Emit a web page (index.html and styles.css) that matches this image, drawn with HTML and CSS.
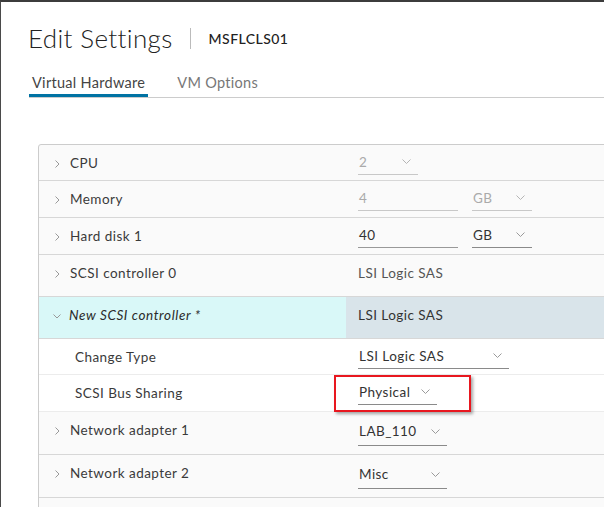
FILE: index.html
```html
<!DOCTYPE html>
<html>
<head>
<meta charset="utf-8">
<link rel="stylesheet" href="styles.css">
</head>
<body>
<div class="dialog">
  <div class="header">
    <h1 class="title">Edit Settings</h1>
    <span class="divider"></span>
    <span class="vmname">MSFLCLS01</span>
  </div>
  <div class="tabs">
    <div class="tab active">Virtual Hardware</div>
    <div class="tab">VM Options</div>
  </div>
  <div class="table">
    <div class="row h36">
      <div class="label"><svg class="chev" viewBox="0 0 5 8"><polyline points="0.5,0.5 4,4 0.5,7.5"/></svg>CPU</div>
      <div class="value"><span class="select disabled w60"><span>2</span><svg class="dd" viewBox="0 0 9 5"><polyline points="0.5,0.5 4.5,4.5 8.5,0.5"/></svg></span></div>
    </div>
    <div class="row h37">
      <div class="label"><svg class="chev" viewBox="0 0 5 8"><polyline points="0.5,0.5 4,4 0.5,7.5"/></svg>Memory</div>
      <div class="value">
        <span class="input disabled w100">4</span>
        <span class="select disabled w60 unit"><span>GB</span><svg class="dd" viewBox="0 0 9 5"><polyline points="0.5,0.5 4.5,4.5 8.5,0.5"/></svg></span>
      </div>
    </div>
    <div class="row h37">
      <div class="label"><svg class="chev" viewBox="0 0 5 8"><polyline points="0.5,0.5 4,4 0.5,7.5"/></svg>Hard disk 1</div>
      <div class="value">
        <span class="input w100">40</span>
        <span class="select w60 unit"><span>GB</span><svg class="dd" viewBox="0 0 9 5"><polyline points="0.5,0.5 4.5,4.5 8.5,0.5"/></svg></span>
      </div>
    </div>
    <div class="row h42">
      <div class="label"><svg class="chev" viewBox="0 0 5 8"><polyline points="0.5,0.5 4,4 0.5,7.5"/></svg>SCSI controller 0</div>
      <div class="value"><span class="plain">LSI Logic SAS</span></div>
    </div>
    <div class="row h42 expanded">
      <div class="label new"><svg class="chevdown" viewBox="0 0 8 5"><polyline points="0.5,0.5 4,4 7.5,0.5"/></svg><em>New SCSI controller *</em></div>
      <div class="value sel"><span class="plain">LSI Logic SAS</span></div>
    </div>
    <div class="row h36 sub">
      <div class="label sublabel">Change Type</div>
      <div class="value"><span class="select w151"><span>LSI Logic SAS</span><svg class="dd" viewBox="0 0 9 5"><polyline points="0.5,0.5 4.5,4.5 8.5,0.5"/></svg></span></div>
    </div>
    <div class="row h37 sub">
      <div class="label sublabel">SCSI Bus Sharing</div>
      <div class="value"><span class="select w79"><span>Physical</span><svg class="dd" viewBox="0 0 9 5"><polyline points="0.5,0.5 4.5,4.5 8.5,0.5"/></svg></span><span class="highlight"></span></div>
    </div>
    <div class="row h43">
      <div class="label"><svg class="chev" viewBox="0 0 5 8"><polyline points="0.5,0.5 4,4 0.5,7.5"/></svg>Network adapter 1</div>
      <div class="value"><span class="select tall w89"><span>LAB_110</span><svg class="dd" viewBox="0 0 9 5"><polyline points="0.5,0.5 4.5,4.5 8.5,0.5"/></svg></span></div>
    </div>
    <div class="row h43">
      <div class="label"><svg class="chev" viewBox="0 0 5 8"><polyline points="0.5,0.5 4,4 0.5,7.5"/></svg>Network adapter 2</div>
      <div class="value"><span class="select tall w89"><span>Misc</span><svg class="dd" viewBox="0 0 9 5"><polyline points="0.5,0.5 4.5,4.5 8.5,0.5"/></svg></span></div>
    </div>
    <div class="row h43"></div>
  </div>
</div>
</body>
</html>
```
FILE: styles.css
```css
html, body {
  margin: 0;
  padding: 0;
  width: 604px;
  height: 507px;
  overflow: hidden;
  background: #fff;
}
.dialog {
  box-sizing: border-box;
  width: 604px;
  height: 507px;
  border-top: 2px solid #3c3c3c;
  border-left: 1px solid #4a4a4a;
  font-family: "Lato", "Open Sans", sans-serif;
  color: #333;
  overflow: hidden;
}
.header {
  display: flex;
  align-items: center;
  padding: 21px 0 0 27px;
  height: 30px;
}
.title {
  margin: 0;
  font-size: 26px;
  font-weight: 300;
  color: #222;
  letter-spacing: 0.35px;
}
.divider {
  width: 1px;
  height: 21px;
  background: #bbb;
  margin: 0 18px 0 17px;
}
.vmname {
  font-size: 14px;
  font-weight: 500;
  color: #222;
  letter-spacing: 0.45px;
}
.tabs {
  display: flex;
  margin: 20px 0 0 28px;
  border-bottom: 1px solid #ccc;
  height: 24px;
}
.tab {
  font-size: 14.5px;
  color: #777;
  padding: 0 3px;
  line-height: 20px;
  box-sizing: border-box;
  height: 24px;
  letter-spacing: 0.3px;
}
.tab.active {
  color: #444;
  border-bottom: 3px solid #0072a3;
}
.tab + .tab {
  margin-left: 26px;
}
.table {
  margin: 46px 0 0 37px;
  width: 640px;
  border: 1px solid #ccc;
  border-top-left-radius: 3px;
  background: #fafafa;
}
.row {
  display: grid;
  grid-template-columns: 307px 1fr;
  border-bottom: 1px solid #d7d7d7;
  box-sizing: border-box;
  font-size: 13.5px;
  letter-spacing: 0.45px;
}
.h36 { height: 36px; }
.h37 { height: 37px; }
.h42 { height: 42px; }
.h43 { height: 43px; }
.row.sub {
  background: #fff;
  border-bottom-color: #ececec;
}
.label, .value {
  display: flex;
  align-items: center;
  height: 36px;
}
.label {
  padding-left: 16px;
  color: #3a3a3a;
}
.sublabel {
  padding-left: 36px;
}
.chev {
  width: 5px;
  height: 8px;
  margin-right: 10px;
  margin-top: 2px;
  fill: none;
  stroke: #999;
  stroke-width: 1;
}
.chevdown {
  width: 8px;
  height: 5px;
  margin-right: 8px;
  margin-left: -2px;
  margin-top: 2px;
  fill: none;
  stroke: #999;
  stroke-width: 1;
}
.label.new {
  background: #d9f8f8;
  height: 41px;
  align-items: flex-start;
  padding-top: 10px;
  box-sizing: border-box;
  line-height: 16px;
}
.label.new .chevdown {
  margin-top: 7px;
}
.label em {
  font-style: italic;
  color: #2a2a2a;
  letter-spacing: 0.6px;
}
.value {
  padding-left: 12px;
  position: relative;
}
.value.sel {
  background: #d9e4ea;
  height: 41px;
  align-items: flex-start;
  padding-top: 10px;
  box-sizing: border-box;
  line-height: 16px;
}
.plain {
  color: #555;
}
.sel .plain {
  color: #333;
}
.select, .input {
  display: inline-flex;
  align-items: center;
  justify-content: space-between;
  box-sizing: border-box;
  height: 24px;
  padding: 0 4px 2px 1px;
  border-bottom: 1px solid #8a8a8a;
  color: #333;
  margin-top: 0;
}
.select.tall {
  height: 28px;
  padding-bottom: 0;
  align-items: flex-start;
  padding-top: 5px;
  margin-top: 4px;
}
.select.tall .dd {
  margin-top: 6px;
}
.input {
  border-bottom-color: #999;
}
.disabled {
  color: #aaa;
  border-bottom-color: #c8c8c8;
}
.w60 { width: 60px; }
.w79 { width: 79px; }
.w89 { width: 89px; }
.w100 { width: 100px; }
.w151 { width: 151px; }
.unit { margin-left: 14px; }
.dd {
  width: 9px;
  height: 5px;
  fill: none;
  stroke: #9a9a9a;
  stroke-width: 1;
  margin-right: 3px;
}
.disabled .dd {
  stroke: #b5b5b5;
}
.highlight {
  position: absolute;
  left: -12px;
  top: 0;
  width: 137px;
  height: 37px;
  box-sizing: border-box;
  border: 2px solid #e8171f;
  box-shadow: 2px 2px 3px rgba(0,0,0,0.35);
}
```
